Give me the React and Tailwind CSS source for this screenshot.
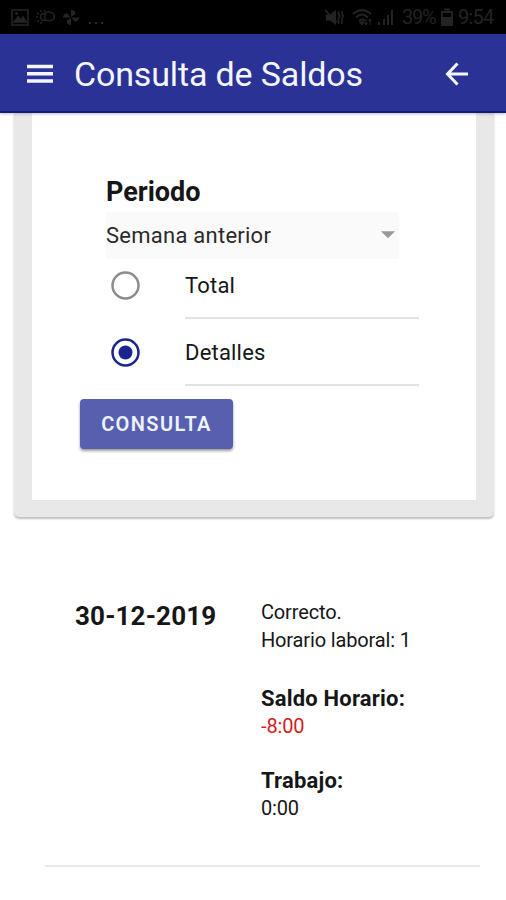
import { useState } from "react";
import { MdArrowDropDown } from "react-icons/md";

const results = [
    {
        date: "30-12-2019",
        status: "Correcto.",
        schedule: "Horario laboral: 1",
        balance: "-8:00",
        work: "0:00",
    },
];

function StatusBar() {
    return (
        <div className="flex h-[34px] items-center justify-between bg-black pl-[11px] pr-[12px] text-[#232323]">
            <div className="flex items-center">
                <svg width="18" height="17" viewBox="0 0 18 17" fill="none" stroke="currentColor" strokeWidth="1.6">
                    <rect x="1" y="1" width="16" height="15" />
                    <path d="M3 13l4-5 3 3 2-3 3 5z" fill="currentColor" />
                    <circle cx="5.5" cy="4.5" r="0.8" fill="currentColor" />
                </svg>
                <svg className="ml-[7px]" width="19" height="16" viewBox="0 0 19 16" fill="none" stroke="currentColor" strokeWidth="1.5">
                    <path d="M9 4.500a3.600 3.600 0 1 0 0 7M5 1v2M1 4l2 1M0 8h2M1 13l2-1.500M5 15v-2M9 1l-1 2M9 12V5.500a3 3 0 0 1 5-2 4 4 0 0 1 1 8H9" />
                </svg>
                <svg className="ml-[8px]" width="17" height="17" viewBox="0 0 17 17" fill="currentColor">
                    <path d="M8 8V1c3 0 5 2 4 4.500L8 8zM8.500 8.500H16c0 3-2.500 5-5 3.500L8.500 8.500zM8 9v7c-3 0-5-2-4-4.500L8 9zM7.500 8.500H0c0-3 2.500-5 5-3.500l2.500 3.500z" />
                </svg>
                <div className="ml-[9px] mt-[12px] flex gap-[4px]">
                    <span className="size-[2px] bg-[#2b2b2b]"></span>
                    <span className="size-[2px] bg-[#2b2b2b]"></span>
                    <span className="size-[2px] bg-[#2b2b2b]"></span>
                </div>
            </div>
            <div className="flex items-center">
                <svg className="-mr-[2px]" width="20" height="17" viewBox="0 0 20 17" fill="none" stroke="currentColor" strokeWidth="1.600">
                    <path d="M1 5.500h4l6-4.500v15l-6-4.500H1z" fill="currentColor" stroke="none" />
                    <path d="M0 1l12 12" />
                    <path d="M13.500 2v3l1.500 2-1.500 2v6M17 2v3l1.500 2-1.500 2v6" />
                </svg>
                <svg className="ml-[9px]" width="21" height="17" viewBox="0 0 21 17" fill="none" stroke="currentColor" strokeWidth="1.800">
                    <path d="M1 5q9-8 18 0M4 8.500q6-6 12 0M7 12q3-3 6 0" />
                    <path d="M7.500 13l2.500 3 2-3zM14 10v6M12.500 14l1.500 2 1.500-2M18 16v-6M16.500 12l1.500-2 1.500 2" strokeWidth="1" fill="currentColor" />
                </svg>
                <svg className="ml-[5px]" width="16" height="16" viewBox="0 0 16 16" fill="currentColor">
                    <path d="M0 13h2v3H0zM5 10h2v6H5zM9 6h2v10H9zM13 1h2v15h-2z" />
                </svg>
                <span className="ml-[8px] w-[34px] whitespace-nowrap text-[20px] leading-none tracking-[-1.2px]">39%</span>
                <svg className="ml-[5px]" width="12" height="18" viewBox="0 0 12 18" fill="none" stroke="currentColor" strokeWidth="2">
                    <path d="M3 1.500h6M1 4h10v13H1z" />
                    <path d="M2 9h8v7H2z" fill="currentColor" stroke="none" />
                </svg>
                <span className="ml-[5px] w-[36px] whitespace-nowrap text-[20px] leading-none tracking-[-0.8px]">9:54</span>
            </div>
        </div>
    );
}

function Radio({ label, checked, onSelect }) {
    return (
        <div className="flex h-[67px] cursor-pointer" onClick={onSelect}>
            <svg className="ml-[5px] mt-[19px] shrink-0" width="29" height="29" viewBox="0 0 29 29">
                <circle cx="14.500" cy="14.500" r="13" fill="none" strokeWidth="2.500" className={checked ? "stroke-[#1b2590]" : "stroke-[#8c8c8c]"} />
                {checked && <circle cx="14.500" cy="14.500" r="7" className="fill-[#1b2590]" />}
            </svg>
            <div className="ml-[45px] flex w-[234px] items-center border-b-2 border-[#e2e2e2] pt-[1px] text-[22px] tracking-[0.200px]">
                {label}
            </div>
        </div>
    );
}

function App() {

    const [mode, setMode] = useState("Detalles");

    return (
        <div className="flex h-[900px] w-[506px] flex-col overflow-hidden bg-white font-['Roboto',sans-serif] text-[#161616]">
            <StatusBar />

            {/* Toolbar */}
            <header className="z-10 flex h-[79px] shrink-0 items-center border-b-2 border-[#151b7c] bg-[#2a3295] pl-[27px] pr-[37px] pt-[2px] text-[#f4f6ff] shadow-[0_1px_3px_rgba(0,0,0,0.25)]">
                <svg width="26" height="20" viewBox="0 0 26 20" fill="none" stroke="currentColor" strokeWidth="3.400">
                    <path d="M0 2.500h26M0 9.800h26M0 17h26" />
                </svg>
                <h1 className="ml-[21px] flex-1 whitespace-nowrap text-[34px] leading-none tracking-[-0.15px]">Consulta de Saldos</h1>
                <svg width="24" height="24" viewBox="0 0 24 24" fill="none" stroke="currentColor" strokeWidth="3">
                    <path d="M12.500 1.500L2.500 12l10 10.500M2.500 12H23" />
                </svg>
            </header>

            {/* Query form */}
            <section className="ml-[14px] mr-[12px] h-[404px] shrink-0 rounded-b-[5px] bg-[#e8e8e8] px-[18px] pb-[17px] shadow-[0_2px_2px_rgba(0,0,0,0.25)]">
                <div className="h-full bg-white pl-[48px] pt-[60px]">
                    <div className="pl-[26px]">
                        <h2 className="h-[39px] pt-[1px] text-[27px] font-bold leading-[36px]">Periodo</h2>
                        <div className="flex h-[47px] w-[293px] items-center justify-between bg-[#fafafa] text-[22px] tracking-[0.250px] text-[#2a2a2a]">
                            Semana anterior
                            <MdArrowDropDown size={34} className="-mr-[6px] -mt-[3px] text-[#999999]" />
                        </div>
                        <div className="-mt-[7px]">
                            <Radio label="Total" checked={mode === "Total"} onSelect={() => setMode("Total")} />
                            <Radio label="Detalles" checked={mode === "Detalles"} onSelect={() => setMode("Detalles")} />
                        </div>
                    </div>
                    <button className="mt-[13px] h-[50px] w-[153px] rounded-[4px] bg-[#575fae] text-[20px] font-semibold tracking-[1.400px] text-[#eef2ff] shadow-[0_2px_3px_rgba(0,0,0,0.4)]">
                        CONSULTA
                    </button>
                </div>
            </section>

            {/* Results */}
            {results.map((item) => (
                <article key={item.date} className="ml-[45px] mt-[81px] flex h-[269px] w-[435px] shrink-0 border-b-2 border-[#e9e9e9] pl-[30px]">
                    <h3 className="w-[186px] pt-[4px] text-[26px] font-bold leading-[28px] tracking-[0.150px]">{item.date}</h3>
                    <div className="text-[20px] leading-[28px] tracking-[-0.150px]">
                        <p>{item.status}</p>
                        <p>{item.schedule}</p>
                        <h4 className="mt-[31px] text-[22px] font-bold leading-[27px] tracking-[0.200px]">Saldo Horario:</h4>
                        <p className="text-[#d32020]">{item.balance}</p>
                        <h4 className="mt-[27px] text-[22px] font-bold leading-[27px] tracking-[0.200px]">Trabajo:</h4>
                        <p>{item.work}</p>
                    </div>
                </article>
            ))}
        </div>
    );
}

export default App;
